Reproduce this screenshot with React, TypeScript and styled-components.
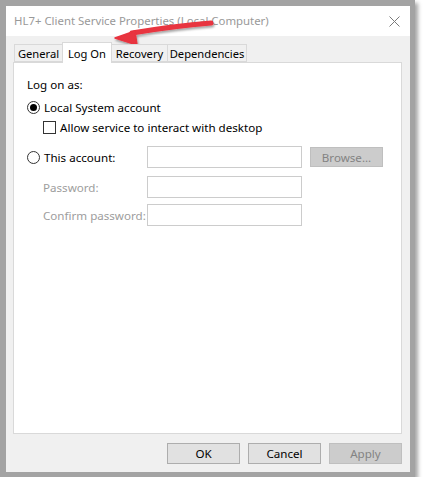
import styled, { createGlobalStyle } from 'styled-components';

const GlobalStyle = createGlobalStyle`
  html, body {
    margin: 0;
    padding: 0;
    background: #ffffff;
  }
  body {
    font-family: 'Noto Sans', 'Liberation Sans', sans-serif;
    font-size: 11.6px;
    color: #000000;
  }
`;

const Frame = styled.div`
  position: relative;
  width: 415px;
  height: 477px;
  box-sizing: border-box;
  padding: 6px 5px 5px 6px;
  background: #a3a3a3;
  box-shadow: 3px 3px 4px rgba(0, 0, 0, 0.35);
`;

const Dialog = styled.div`
  width: 404px;
  height: 466px;
  background: #f0f0f0;
  display: flex;
  flex-direction: column;
`;

const TitleBar = styled.div`
  height: 30px;
  background: #ffffff;
  display: flex;
  align-items: center;
  justify-content: space-between;
  padding: 0 10px 0 8px;
`;

const Title = styled.span`
  color: #999999;
  font-size: 11.4px;
  margin-top: -2px;
`;

const CloseIcon = () => (
  <svg width="11" height="11" viewBox="0 0 11 11">
    <path d="M0.5 0.5 L10.5 10.5 M10.5 0.5 L0.5 10.5" stroke="#7a7a7a" strokeWidth="1" />
  </svg>
);

const Body = styled.div`
  flex: 1;
  display: flex;
  flex-direction: column;
  padding: 7px 8px 0 7px;
`;

const TabStrip = styled.div`
  display: flex;
  align-items: flex-end;
  height: 19px;
  padding-left: 2px;
  position: relative;
  z-index: 1;
`;

const Tab = styled.div<{ $active?: boolean; $w: number }>`
  box-sizing: border-box;
  height: ${(p) => (p.$active ? '21px' : '18px')};
  margin-bottom: ${(p) => (p.$active ? '-1px' : '0')};
  display: flex;
  align-items: center;
  justify-content: center;
  white-space: nowrap;
  font-size: 11.2px;
  border: 1px solid #d9d9d9;
  border-bottom: ${(p) => (p.$active ? 'none' : '1px solid #d9d9d9')};
  margin-left: -1px;
  background: ${(p) => (p.$active ? '#ffffff' : '#f0f0f0')};
  width: ${(p) => p.$w}px;
`;

const Panel = styled.div`
  height: 372px;
  box-sizing: border-box;
  background: #ffffff;
  border: 1px solid #d9d9d9;
  padding: 0 13px;
  display: flex;
  flex-direction: column;
`;

const Row = styled.div<{ $top: number; $indent?: number }>`
  display: flex;
  align-items: center;
  height: 20px;
  margin-top: ${(p) => p.$top}px;
  padding-left: ${(p) => p.$indent ?? 0}px;
`;

const FieldRow = styled.div<{ $top: number }>`
  display: grid;
  grid-template-columns: 112px 155px 73px;
  column-gap: 8px;
  align-items: center;
  height: 22px;
  margin-top: ${(p) => p.$top}px;
`;

const Label = styled.span<{ $disabled?: boolean; $indent?: number }>`
  color: ${(p) => (p.$disabled ? '#9d9d9d' : '#000000')};
  padding-left: ${(p) => p.$indent ?? 0}px;
  white-space: nowrap;
`;

const RadioWrap = styled.label`
  display: flex;
  align-items: center;
  gap: 4px;
  white-space: nowrap;
`;

const RadioDot = styled.span<{ $checked?: boolean }>`
  box-sizing: border-box;
  width: 13px;
  height: 13px;
  border-radius: 50%;
  border: 1px solid #333333;
  background: #ffffff;
  display: flex;
  align-items: center;
  justify-content: center;
  &::after {
    content: '';
    width: 7px;
    height: 7px;
    border-radius: 50%;
    background: ${(p) => (p.$checked ? '#000000' : 'transparent')};
  }
`;

const CheckBox = styled.span`
  box-sizing: border-box;
  width: 13px;
  height: 13px;
  border: 1px solid #333333;
  background: #ffffff;
`;

const TextBox = styled.div`
  box-sizing: border-box;
  height: 22px;
  border: 1px solid #cccccc;
  background: #ffffff;
`;

const Button = styled.div<{ $disabled?: boolean }>`
  box-sizing: border-box;
  width: 73px;
  height: 21px;
  display: flex;
  align-items: center;
  justify-content: center;
  background: ${(p) => (p.$disabled ? '#cccccc' : '#e1e1e1')};
  border: 1px solid ${(p) => (p.$disabled ? '#bfbfbf' : '#adadad')};
  color: ${(p) => (p.$disabled ? '#838383' : '#000000')};
`;

const SmallButton = styled(Button)`
  height: 20px;
`;

const Footer = styled.div`
  display: flex;
  justify-content: flex-end;
  gap: 8px;
  margin-top: 9px;
`;

const Callout = styled.svg`
  position: absolute;
  left: 104px;
  top: 12px;
  overflow: visible;
`;

function Radio({ checked, children }: { checked?: boolean; children: React.ReactNode }) {
  return (
    <RadioWrap>
      <RadioDot $checked={checked} />
      {children}
    </RadioWrap>
  );
}

const tabs = [
  { name: 'General', w: 49 },
  { name: 'Log On', w: 50, active: true },
  { name: 'Recovery', w: 57 },
  { name: 'Dependencies', w: 80 },
];

export default function App() {
  return (
    <>
      <GlobalStyle />
      <Frame>
        <Dialog>
          <TitleBar>
            <Title>HL7+ Client Service Properties (Local Computer)</Title>
            <CloseIcon />
          </TitleBar>
          <Body>
            <TabStrip>
              {tabs.map((t) => (
                <Tab key={t.name} $active={t.active} $w={t.w}>
                  {t.name}
                </Tab>
              ))}
            </TabStrip>
            <Panel>
              <Row $top={11}>
                <Label>Log on as:</Label>
              </Row>
              <Row $top={3}>
                <Radio checked>Local System account</Radio>
              </Row>
              <Row $top={0} $indent={16}>
                <RadioWrap>
                  <CheckBox />
                  Allow service to interact with desktop
                </RadioWrap>
              </Row>
              <FieldRow $top={9}>
                <Radio>This account:</Radio>
                <TextBox />
                <SmallButton $disabled>Browse...</SmallButton>
              </FieldRow>
              <FieldRow $top={8}>
                <Label $disabled $indent={16}>Password:</Label>
                <TextBox />
              </FieldRow>
              <FieldRow $top={6}>
                <Label $disabled $indent={16}>Confirm password:</Label>
                <TextBox />
              </FieldRow>
            </Panel>
            <Footer>
              <Button>OK</Button>
              <Button>Cancel</Button>
              <Button $disabled>Apply</Button>
            </Footer>
          </Body>
        </Dialog>
        <Callout width="110" height="36" viewBox="0 0 110 36">
          <defs>
            <filter id="arrowShade" x="-20%" y="-40%" width="140%" height="180%">
              <feDropShadow dx="1" dy="2" stdDeviation="1.2" floodColor="#000000" floodOpacity="0.35" />
            </filter>
          </defs>
          <g filter="url(#arrowShade)">
            <path d="M107 11 Q70 14 28 21" stroke="#e8343f" strokeWidth="5" fill="none" strokeLinecap="round" />
            <path d="M11 26 L31 19 L33 33 Z" fill="#e8343f" stroke="#e8343f" strokeWidth="1.5" strokeLinejoin="round" />
          </g>
        </Callout>
      </Frame>
    </>
  );
}
